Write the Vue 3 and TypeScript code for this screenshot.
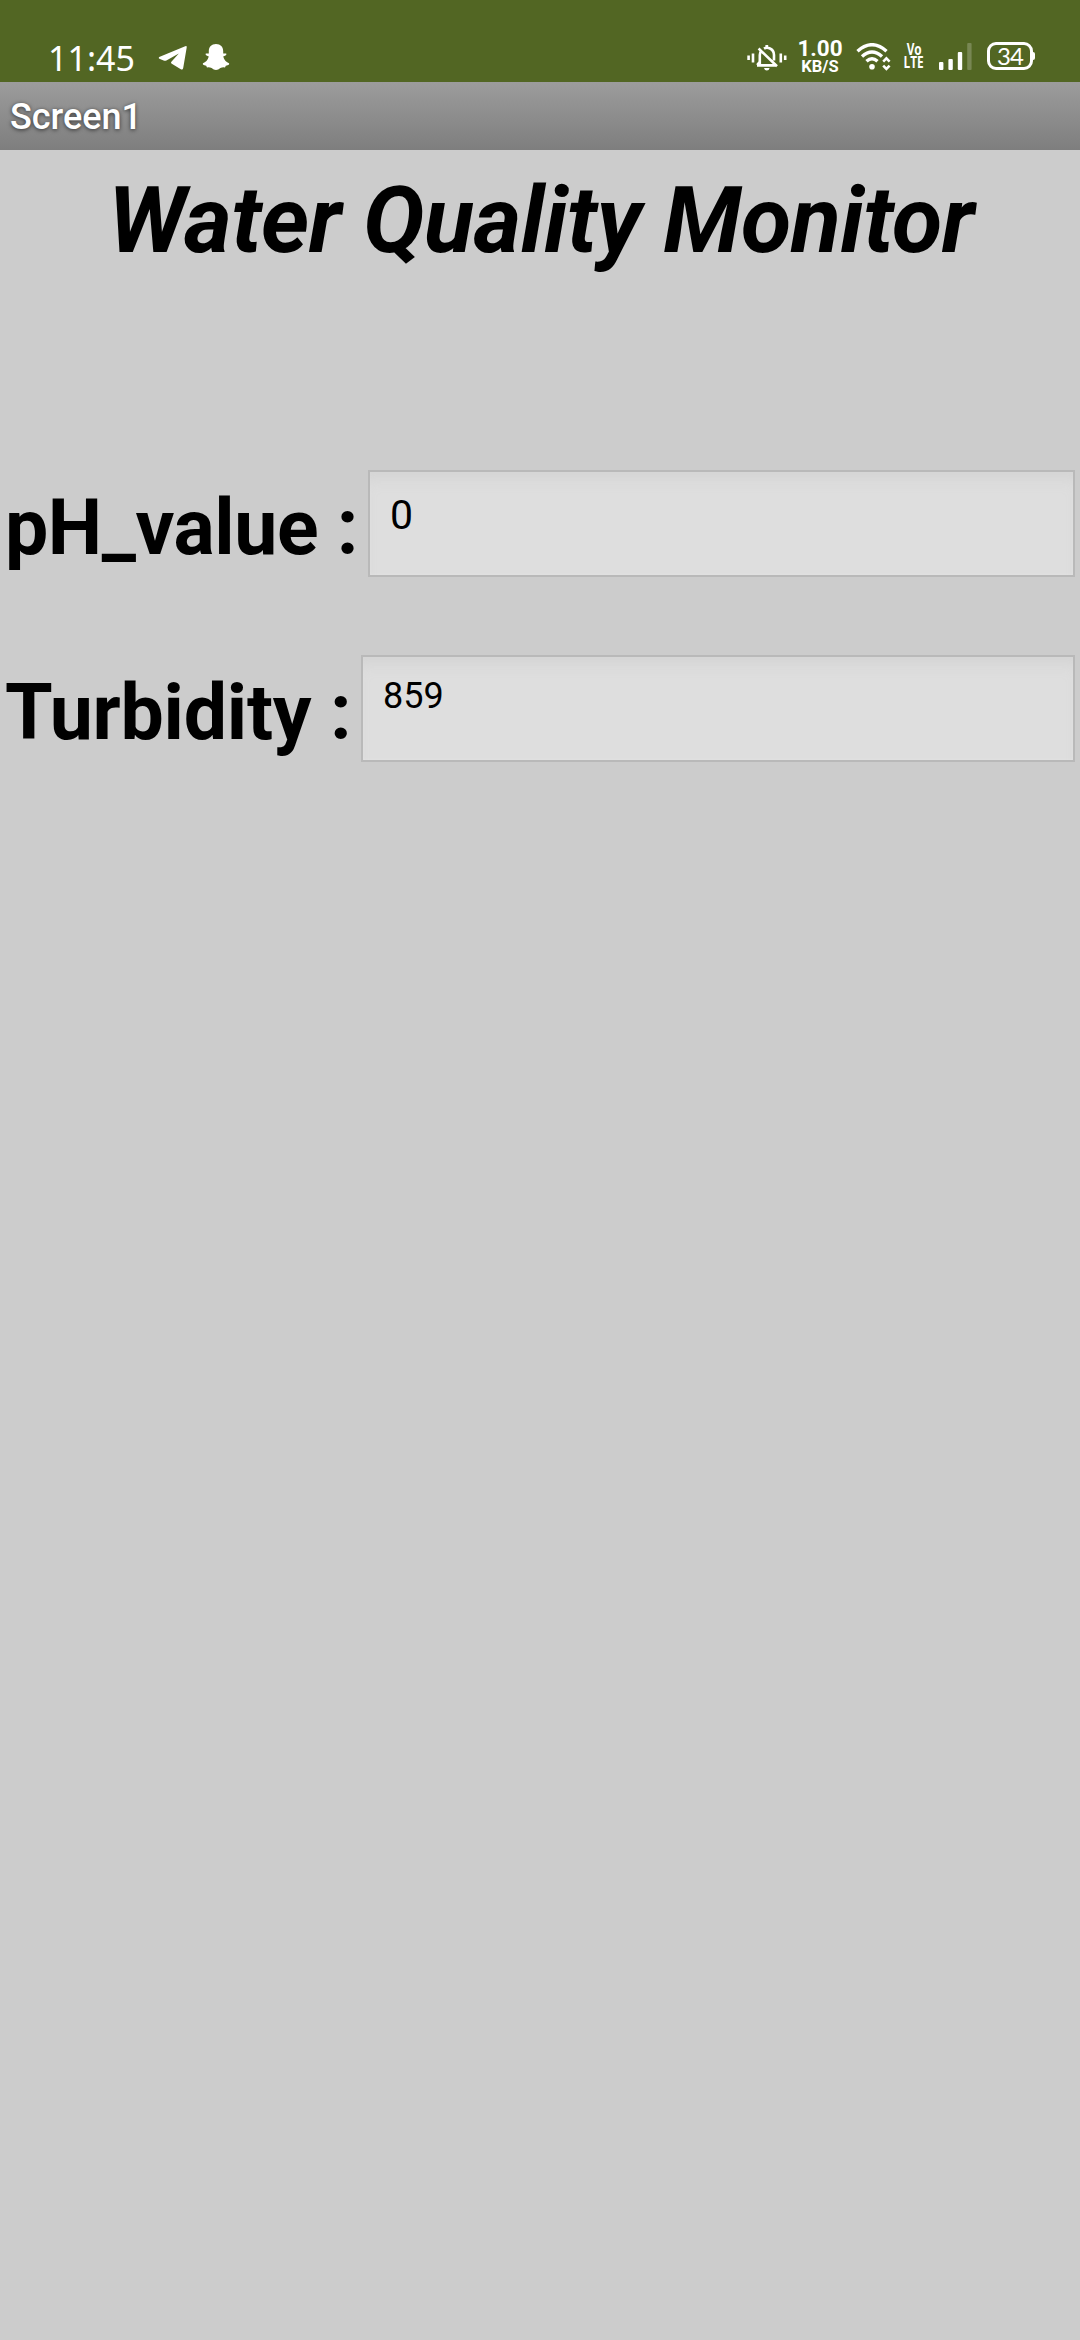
<script setup lang="ts">
interface Reading {
  key: string
  label: string
  value: string
}

const readings: Reading[] = [
  { key: 'ph', label: 'pH_value :', value: '0' },
  { key: 'turbidity', label: 'Turbidity :', value: '859' },
]
</script>

<template>
  <div class="screen">
    <header class="status">
      <span class="clock">11:45</span>
      <svg class="telegram" width="30" height="26" viewBox="0 0 30 26">
        <path d="M1.2 12 27.2 1.2Q29 .5 28.7 2.4L25.2 23Q24.8 25.3 22.8 24.2L13.4 18.4Q12.6 17.6 13.4 16.8L20.8 8.6 8.4 15.4Q7 16 5.600 15.400L1.400 13.800Q0 13 1.200 12Z" fill="#fff" />
      </svg>
      <svg class="snap" width="28" height="28" viewBox="0 0 28 28">
        <path d="M14 1C9.500 1 6.800 4 6.800 8.200V10.600Q5.400 10.400 3.800 10.600 3 11.800 4.500 12.500L6.800 13.600C5.800 17.400 3.500 19.400 1 20.300 .2 21.400 1.400 22.100 4.200 22.700L5 24.400Q7.500 24 9.600 25 11.700 27 14 27 16.300 27 18.400 25 20.500 24 23 24.400L23.800 22.700C26.600 22.100 27.800 21.400 27 20.300 24.500 19.400 22.200 17.400 21.200 13.600L23.500 12.500Q25 11.800 24.200 10.600 22.600 10.400 21.200 10.600V8.200C21.200 4 18.500 1 14 1Z" fill="#fff" />
      </svg>
      <span class="spacer"></span>
      <svg class="bell" width="40" height="28" viewBox="0 0 40 28" fill="none" stroke="#fff" stroke-width="2.600">
        <path d="M1.600 11.500V16M6 9.500V18.500M33.800 9.500V18.500M38.200 11.500V16" />
        <path d="M10 21.400H29.500M12.800 21V11Q12.800 8.500 14.200 6.800M17 4.600Q19.500 3 22.500 4.200 27 6 27 11V16.500M10.200 21 13 17.500M11.600 4.500 30 22.200" />
        <path d="M19.800 1V3.500" stroke-width="2.800" />
        <path d="M17 24H22.600Q22 26.500 19.800 26.500T17 24Z" fill="#fff" stroke="none" />
      </svg>
      <span class="speed"><b class="rate">1.00</b><b class="unit">KB/S</b></span>
      <svg class="wifi" width="36" height="28" viewBox="0 0 36 28" fill="none" stroke="#fff" stroke-width="3.400">
        <path d="M1.500 8.200Q16 -4.800 30.500 8.200M6 13.500Q16 4.500 26 13.500M10.500 18.300Q16 13.300 21.500 18.300" />
        <circle cx="16" cy="23.800" r="2.800" fill="#fff" stroke="none" />
        <path d="M27.200 18.600 30.400 15.400 33.600 18.600M27.200 22.600 30.400 25.800 33.600 22.600" stroke-width="2.600" />
      </svg>
      <span class="volte"><b>Vo</b><b>LTE</b></span>
      <svg class="signal" width="34" height="28" viewBox="0 0 34 28" fill="#fff">
        <rect x="0" y="19" width="4.400" height="8" rx="1" />
        <rect x="9.400" y="16" width="4.400" height="11" rx="1" />
        <rect x="18.800" y="9" width="4.400" height="18" rx="1" />
        <rect x="28.200" y="0" width="4.400" height="27" rx="1" opacity=".22" />
      </svg>
      <span class="battery">34</span>
    </header>

    <div class="titlebar">Screen1</div>

    <main class="content">
      <h1>Water Quality Monitor</h1>
      <div v-for="r in readings" :key="r.key" class="row" :class="r.key">
        <span class="label">{{ r.label }}</span>
        <div class="field">{{ r.value }}</div>
      </div>
    </main>
  </div>
</template>

<style>
body {
  background: #ccc;
}
</style>

<style scoped>
.screen {
  width: 1080px;
  height: 2340px;
  overflow: hidden;
  background: #ccc;
  font-family: Roboto, sans-serif;
  color: #000;
}
.status {
  display: flex;
  align-items: flex-start;
  height: 82px;
  box-sizing: border-box;
  padding: 43px 47px 0 48px;
  background: #526623;
  color: #fff;
}
.status svg {
  flex: none;
  display: block;
}
.clock {
  width: 110px;
  margin-top: -2px;
  font: 400 34px/34px "Noto Sans", sans-serif;
  white-space: nowrap;
}
.telegram {
  margin-top: 2px;
}
.snap {
  margin: 0 0 0 14px;
}
.spacer {
  flex: 1;
}
.bell {
  margin: 1px 11px 0 0;
}
.speed {
  display: flex;
  flex-direction: column;
  align-items: center;
  width: 44px;
  margin: -5px 14px 0 0;
}
.rate {
  font-size: 22.5px;
  line-height: 20px;
}
.unit {
  font-size: 16.5px;
  line-height: 17px;
}
.wifi {
  margin-right: 12px;
}
.volte {
  display: flex;
  flex-direction: column;
  align-items: center;
  width: 20px;
  margin: 0 15px 0 0;
  font-family: "Open Sans", sans-serif;
  font-size: 16px;
  line-height: 13px;
}
.volte b {
  transform: scaleX(0.74);
}
.signal {
  margin-right: 14px;
}
.battery {
  position: relative;
  box-sizing: border-box;
  width: 46px;
  height: 28px;
  margin-top: -1px;
  border: 3px solid #fff;
  border-radius: 9px;
  font: 400 24px/22px Lato, sans-serif;
  letter-spacing: -1px;
  text-align: center;
}
.battery::after {
  content: "";
  position: absolute;
  left: 43px;
  top: 7px;
  width: 2px;
  height: 8px;
  border-radius: 0 2px 2px 0;
  background: #fff;
}
.titlebar {
  box-sizing: border-box;
  height: 68px;
  padding-left: 10px;
  background: linear-gradient(#9c9c9c, #7e7e7e);
  color: #fff;
  font-size: 36px;
  font-weight: 500;
  line-height: 70px;
  text-shadow: 0 1px 4px rgba(0, 0, 0, 0.65);
}
.content {
  padding-top: 17px;
}
h1 {
  margin: 0;
  padding-left: 2px;
  font-size: 92px;
  font-weight: 700;
  font-style: italic;
  line-height: 108px;
  letter-spacing: -0.5px;
  text-align: center;
  white-space: nowrap;
}
.row {
  display: flex;
  height: 107px;
  padding: 0 5px;
}
.ph {
  margin-top: 195px;
}
.turbidity {
  margin-top: 78px;
}
.label {
  flex: none;
  font-size: 77px;
  font-weight: 700;
  line-height: 116px;
  white-space: nowrap;
}
.ph .label {
  width: 363px;
  letter-spacing: -0.45px;
}
.turbidity .label {
  width: 356px;
  letter-spacing: -0.25px;
}
.field {
  flex: 1;
  box-sizing: border-box;
  border: 2px solid #b9b9b9;
  padding: 19px 0 0 20px;
  background: #dedede;
  box-shadow: inset 0 14px 16px -8px #d3d3d3, inset 0 0 3px #e6e6e6;
  font-size: 41px;
  line-height: 48px;
}
.turbidity .field {
  padding-top: 18px;
  font-size: 36px;
  line-height: 42px;
}
</style>
